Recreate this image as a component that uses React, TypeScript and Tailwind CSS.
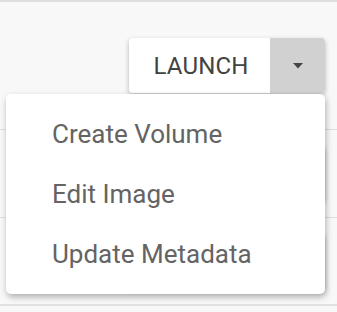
import React from 'react';

const items = ['Create Volume', 'Edit Image', 'Update Metadata'];

function Caret() {
  return (
    <svg width="10" height="6" viewBox="0 0 10 6" className="block">
      <path d="M0 0 L10 0 L5 5.5 Z" fill="#444" />
    </svg>
  );
}

function LaunchGroup({ open, label = 'LAUNCH' }: { open?: boolean; label?: string }) {
  return (
    <div className="relative flex h-[55px] rounded-[4px] shadow-[0_2px_5px_rgba(0,0,0,0.28)]">
      <button className="w-[141px] h-full bg-white rounded-l-[4px] text-[24px] leading-none text-[#424242] tracking-[0.2px] flex items-center justify-center pl-[3px]">
        {label}
      </button>
      <button className="w-[55px] h-full bg-[#d1d1d1] rounded-r-[4px] flex items-center justify-center">
        <Caret />
      </button>

      {/* open dropdown */}
      {open && (
        <div className="absolute right-0 top-full mt-px w-[319px] h-[200px] py-[10px] bg-white rounded-[5px] shadow-[1px_3px_6px_rgba(0,0,0,0.3)] z-10">
          {items.map((item) => (
            <div
              key={item}
              className="h-[60px] flex items-center pl-[46px] text-[26px] text-[#646464]"
            >
              {item}
            </div>
          ))}
        </div>
      )}
    </div>
  );
}

export default function App() {
  return (
    <div className="w-[337px] h-[312px] overflow-hidden bg-[#f8f8f8] font-['Roboto',sans-serif]">
      <div className="h-[2px] bg-[#dedede]" />
      <div className="h-[128px] flex items-center justify-end pr-[12px] border-b-[1.5px] border-[#e0e0e0]">
        <LaunchGroup open />
      </div>
      {/* rows below sit under the menu, only their shadows peek out */}
      <div className="h-[88px] flex items-center justify-end pr-[12px] border-b-[1.5px] border-[#e0e0e0]">
        <LaunchGroup label="" />
      </div>
      <div className="h-[88px] flex items-center justify-end pr-[12px] border-b-[2px] border-[#e0e0e0]">
        <LaunchGroup label="" />
      </div>
    </div>
  );
}
